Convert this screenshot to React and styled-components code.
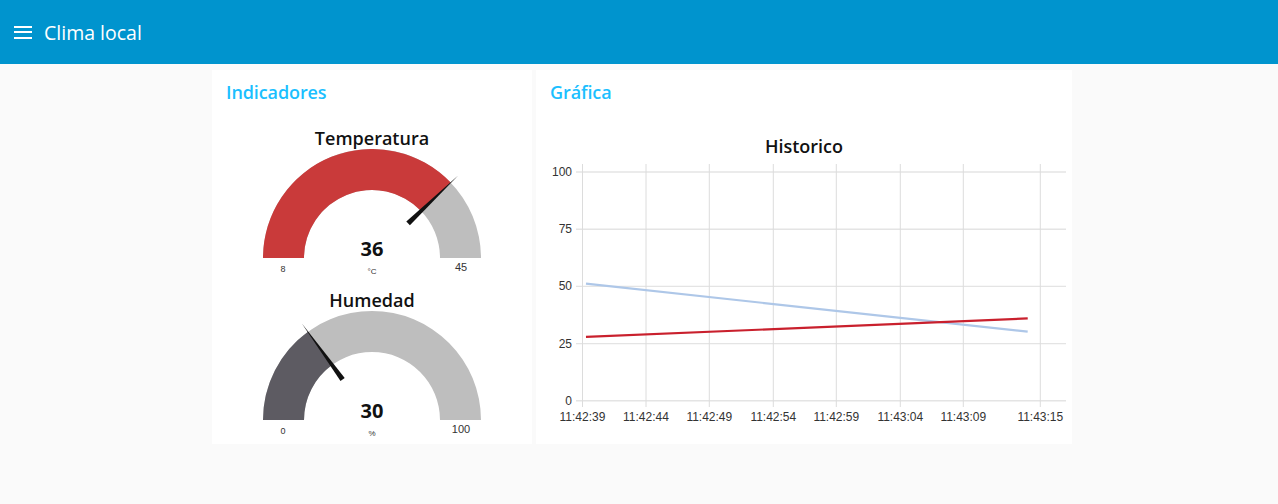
import React from 'react';
import styled, { createGlobalStyle } from 'styled-components';

const GlobalStyle = createGlobalStyle`
  html, body {
    margin: 0;
    padding: 0;
    background-color: #fafafa;
    font-family: "Open Sans", "Noto Sans", Arial, sans-serif;
  }
`;

const Page = styled.div`
  width: 1278px;
  height: 504px;
  background-color: #fafafa;
  overflow: hidden;
`;

const Toolbar = styled.header`
  height: 64px;
  background-color: #0094ce;
  display: flex;
  align-items: center;
  padding-left: 14px;
  gap: 12px;
  color: white;
`;

const MenuIcon = styled.div`
  width: 18px;
  height: 13px;
  display: flex;
  flex-direction: column;
  justify-content: space-between;

  span {
    display: block;
    height: 2px;
    background: white;
  }
`;

const AppTitle = styled.h1`
  margin: 0;
  font-size: 19.5px;
  font-weight: 400;
`;

const Layout = styled.main`
  display: flex;
  gap: 4px;
  padding: 6px 0 0 212px;
`;

const Card = styled.section`
  width: ${p => p.width}px;
  height: 374px;
  background: #fff;
  display: flex;
  flex-direction: column;
`;

const CardTitle = styled.h2`
  margin: 0;
  padding: 10px 14px 0;
  font-size: 18px;
  line-height: 24px;
  font-weight: 600;
  letter-spacing: -0.1px;
  color: #1bbfff;
`;

const GaugeColumn = styled.div`
  margin-top: 23px;
  display: flex;
  flex-direction: column;
`;

const WidgetTitle = styled.div`
  text-align: center;
  font-size: 18px;
  line-height: 22px;
  font-weight: 600;
  color: #111;
`;

const ChartTitle = styled(WidgetTitle)`
  margin-top: 31px;
`;

const GaugeSvg = styled.svg`
  display: block;
`;

const polar = (cx, cy, r, deg) => {
  const a = (deg * Math.PI) / 180;
  return [cx + r * Math.cos(a), cy - r * Math.sin(a)];
};

const arcPath = (cx, cy, ro, ri, from, to) => {
  const [x1, y1] = polar(cx, cy, ro, from);
  const [x2, y2] = polar(cx, cy, ro, to);
  const [x3, y3] = polar(cx, cy, ri, to);
  const [x4, y4] = polar(cx, cy, ri, from);
  const large = Math.abs(from - to) > 180 ? 1 : 0;
  return `M${x1},${y1} A${ro},${ro} 0 ${large} 1 ${x2},${y2} L${x3},${y3} A${ri},${ri} 0 ${large} 0 ${x4},${y4} Z`;
};

function Gauge({ title, value, min, max, unit, fill }) {
  const cx = 160;
  const cy = 109;
  const ro = 109;
  const ri = 68;
  const frac = (value - min) / (max - min);
  const ang = 180 - 180 * frac;
  const a = (ang * Math.PI) / 180;
  const nx = -Math.sin(a);
  const ny = -Math.cos(a);
  const [bx, by] = polar(cx, cy, 50, ang);
  const [tx, ty] = polar(cx, cy, 119, ang);
  const w = 2.6;
  const needle = `${bx + nx * w},${by + ny * w} ${bx - nx * w},${by - ny * w} ${tx},${ty}`;
  return (
    <div>
      <WidgetTitle>{title}</WidgetTitle>
      <GaugeSvg width="320" height="140" viewBox="0 0 320 140">
        <path d={arcPath(cx, cy, ro, ri, 180, 0.01)} fill="#bebebe" />
        <path d={arcPath(cx, cy, ro, ri, 180, ang)} fill={fill} />
        <polygon points={needle} fill="#111" />
        <text x={cx} y="107" textAnchor="middle" fontSize="20" fontWeight="700" fill="#111"
          fontFamily="'Open Sans', 'Noto Sans', sans-serif">{value}</text>
        <text x={cx} y="125" textAnchor="middle" fontSize="8" fill="#333"
          fontFamily="'Liberation Sans', Arial, sans-serif">{unit}</text>
        <text x="71" y="123" textAnchor="middle" fontSize="9" fill="#333"
          fontFamily="'Liberation Sans', Arial, sans-serif">{min}</text>
        <text x="249" y="122" textAnchor="middle" fontSize="11" fill="#333"
          fontFamily="'Liberation Sans', Arial, sans-serif">{max}</text>
      </GaugeSvg>
    </div>
  );
}

const yTicks = [100, 75, 50, 25, 0];
const xTicks = [
  ['11:42:39', 46.5], ['11:42:44', 110], ['11:42:49', 173.3], ['11:42:54', 237.3],
  ['11:42:59', 300.3], ['11:43:04', 364.3], ['11:43:09', 427.3], ['11:43:15', 504.3],
];
const yPos = v => 243.8 - (v / 100) * 228.8;

function LineChart() {
  const font = "'Liberation Sans', Arial, sans-serif";
  return (
    <GaugeSvg width="536" height="283" viewBox="0 0 536 283">
      {yTicks.map(v => (
        <g key={v}>
          <line x1="40" x2="530" y1={yPos(v)} y2={yPos(v)} stroke="#e4e4e4" strokeWidth="1.4" />
          <text x="36" y={yPos(v) + 4} textAnchor="end" fontSize="12" fill="#333" fontFamily={font}>{v}</text>
        </g>
      ))}
      {xTicks.map(([t, x]) => (
        <g key={t}>
          <line x1={x} x2={x} y1="7" y2="250" stroke="#dcdcdc" strokeWidth="1" />
          <text x={x} y="264" textAnchor="middle" fontSize="12" fill="#333" fontFamily={font}>{t}</text>
        </g>
      ))}
      <line x1="50" y1={yPos(51.2)} x2="491.7" y2={yPos(30.2)} stroke="#aec7e8" strokeWidth="2.2" />
      <line x1="50" y1={yPos(27.9)} x2="491.7" y2={yPos(36)} stroke="#c9202d" strokeWidth="2.2" />
    </GaugeSvg>
  );
}

export default function App() {
  return (
    <Page>
      <GlobalStyle />
      <Toolbar>
        <MenuIcon><span /><span /><span /></MenuIcon>
        <AppTitle>Clima local</AppTitle>
      </Toolbar>
      <Layout>
        <Card width={320}>
          <CardTitle>Indicadores</CardTitle>
          <GaugeColumn>
            <Gauge title="Temperatura" value={36} min={8} max={45} unit="°C" fill="#c93a3a" />
            <Gauge title="Humedad" value={30} min={0} max={100} unit="%" fill="#5d5b62" />
          </GaugeColumn>
        </Card>
        <Card width={536}>
          <CardTitle>Gráfica</CardTitle>
          <ChartTitle>Historico</ChartTitle>
          <LineChart />
        </Card>
      </Layout>
    </Page>
  );
}
